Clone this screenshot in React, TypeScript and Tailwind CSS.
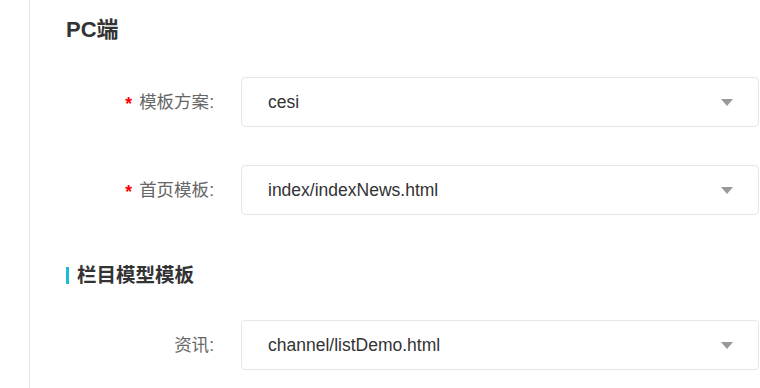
import React from "react";

const font = { fontFamily: '"Liberation Sans", "Noto Sans CJK SC", sans-serif' };

const Caret: React.FC = () => (
  <svg width="12" height="7" viewBox="0 0 12 7" className="shrink-0">
    <path d="M0 0 H12 L6 7 Z" fill="#999" />
  </svg>
);

type RowProps = { label: string; value: string; required?: boolean };

const SelectRow: React.FC<RowProps> = ({ label, value, required }) => (
  <div className="flex items-center h-[50px]">
    <div className="w-[175px] pr-[27px] text-right text-[17.5px] text-[#666]">
      {required && <span className="text-[#ff0000] font-bold mr-[7px] relative top-[2px]">*</span>}
      {label}:
    </div>
    <div className="flex-1 h-[50px] flex items-center justify-between border border-[#e6e6e6] rounded-[4px] bg-white pl-[26px] pr-[25px]">
      <span className="text-[17.5px] text-[#333]">{value}</span>
      <Caret />
    </div>
  </div>
);

export default function App() {
  return (
    <div className="w-[760px] h-[388px] bg-white overflow-hidden pl-[29px]" style={font}>
      <div className="h-full border-l border-[#e6e6e6] pl-[36px] pr-[1px]">
        {/* PC */}
        <h2 className="pt-[14px] text-[22px] leading-[32px] font-bold text-[#333]">PC端</h2>
        <div className="mt-[31px] flex flex-col gap-[38px]">
          <SelectRow label="模板方案" value="cesi" required />
          <SelectRow label="首页模板" value="index/indexNews.html" required />
        </div>

        {/* section */}
        <div className="mt-[48px] flex items-center gap-[8px]">
          <span className="w-[3px] h-[17px] bg-[#1cbbd6]" />
          <h3 className="text-[19.5px] leading-[24px] font-bold text-[#333]">栏目模型模板</h3>
        </div>
        <div className="mt-[33px]">
          <SelectRow label="资讯" value="channel/listDemo.html" />
        </div>
      </div>
    </div>
  );
}
